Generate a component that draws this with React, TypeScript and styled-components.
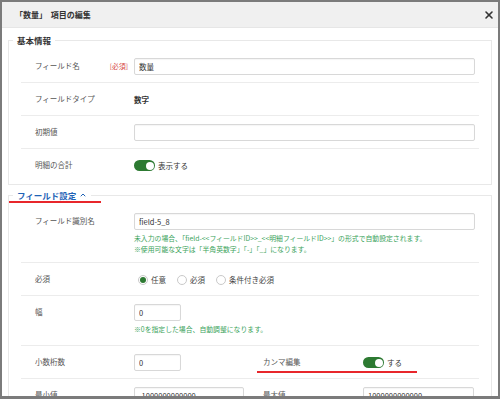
import React from 'react';
import styled, { createGlobalStyle } from 'styled-components';
import { ChevronUp, X } from 'lucide-react';

const GlobalStyle = createGlobalStyle`
  html, body {
    margin: 0;
    padding: 0;
    background: #fff;
  }
  body {
    font-family: "Noto Sans CJK JP", "Noto Sans", sans-serif;
  }
  * {
    box-sizing: border-box;
  }
`;

const Frame = styled.div`
  width: 500px;
  height: 399px;
  border: 2px solid #7b7b7b;
  border-bottom-width: 3px;
  overflow: hidden;
  background: #fff;
  display: flex;
  flex-direction: column;
`;

const Header = styled.header`
  flex: none;
  height: 26px;
  background: #f0f0f0;
  border-bottom: 1px solid #e6e6e6;
  display: flex;
  align-items: center;
  justify-content: space-between;
  padding: 0 3px 0 13px;
`;

const Title = styled.h1`
  margin: 0;
  font-size: 8px;
  font-weight: 700;
  color: #333;
  word-spacing: 2px;
`;

const Close = styled.button`
  border: 0;
  background: none;
  padding: 0;
  display: flex;
  color: #333;
`;

const Body = styled.div`
  flex: 1;
  overflow: hidden;
  padding: 6px 6px 0;
`;

const Section = styled.fieldset`
  margin: 0 0 4px;
  padding: 4px 0 3px;
  border: 1px solid #e8e8e8;
  min-width: 0;
`;

const Legend = styled.legend<{ $accent?: boolean }>`
  position: relative;
  margin-left: 4px;
  padding: 0 4px;
  font-size: 8.5px;
  line-height: 12px;
  font-weight: 700;
  color: ${p => (p.$accent ? '#1f63b6' : '#333')};
  display: flex;
  align-items: center;
  gap: 3px;
`;

const Underline = styled.span<{ $left: number; $width: number; $bottom?: number }>`
  position: absolute;
  z-index: 1;
  left: ${p => p.$left}px;
  width: ${p => p.$width}px;
  bottom: ${p => p.$bottom ?? -1}px;
  height: 2px;
  background: #e8262b;
`;

const Row = styled.div`
  margin: 0 12px;
  padding: 8px 4px 7px 14px;
  border-bottom: 1px solid #ececec;
  display: flex;
  align-items: flex-start;

  &:last-child {
    border-bottom: none;
  }
`;

const HalfGrid = styled(Row)`
  display: grid;
  grid-template-columns: 228px 1fr;
`;

const Half = styled.div`
  position: relative;
  display: flex;
  align-items: flex-start;
`;

const LabelCell = styled.div<{ $w?: number }>`
  flex: none;
  width: ${p => p.$w ?? 99}px;
  height: 15px;
  padding-right: 6px;
  display: flex;
  align-items: center;
  justify-content: space-between;
  font-size: 7.5px;
  color: #555;
`;

const Required = styled.span`
  font-size: 6.8px;
  color: #d64541;
`;

const Field = styled.div`
  flex: 1;
  min-width: 0;
  display: flex;
  flex-direction: column;
`;

const TextInput = styled.input<{ $w?: number }>`
  width: ${p => (p.$w ? `${p.$w}px` : '100%')};
  height: 17px;
  border: 1px solid #d8d8d8;
  border-radius: 2px;
  padding: 0 4px;
  font-family: inherit;
  font-size: 7.5px;
  color: #333;
  background: #fff;
  box-shadow: inset 0 1px 1px rgba(0, 0, 0, 0.04);
  outline: none;
`;

const Value = styled.div`
  height: 17px;
  display: flex;
  align-items: center;
  font-size: 7.5px;
  font-weight: 700;
  color: #333;
`;

const Help = styled.div<{ $after?: number }>`
  margin-top: 3px;
  margin-bottom: ${p => p.$after ?? 0}px;
  font-size: 6.85px;
  line-height: 11px;
  color: #3aa35b;
  white-space: nowrap;
`;

const Inline = styled.div`
  height: 17px;
  display: flex;
  align-items: center;
  gap: 3px;
  font-size: 7.5px;
  color: #333;
`;

const Toggle = styled.span`
  width: 21px;
  height: 11px;
  border-radius: 6px;
  background: #2d7a32;
  display: flex;
  align-items: center;
  justify-content: flex-end;
  padding: 0 1.5px;

  &::after {
    content: '';
    width: 8px;
    height: 8px;
    border-radius: 50%;
    background: #fff;
  }
`;

const RadioGroup = styled.div`
  height: 17px;
  padding-left: 4px;
  display: flex;
  align-items: center;
  gap: 11px;
`;

const RadioItem = styled.label`
  display: flex;
  align-items: center;
  gap: 3px;
  font-size: 7.5px;
  color: #444;
`;

const RadioDot = styled.span<{ $on?: boolean }>`
  width: 10px;
  height: 10px;
  border-radius: 50%;
  border: 1px solid #c9c9c9;
  background: #fff;
  display: flex;
  align-items: center;
  justify-content: center;

  &::after {
    content: '';
    width: 6px;
    height: 6px;
    border-radius: 50%;
    background: ${p => (p.$on ? '#2d7a32' : 'transparent')};
  }
`;

const radios = [
  { label: '任意', on: true },
  { label: '必須', on: false },
  { label: '条件付き必須', on: false },
];

export default function App() {
  return (
    <>
      <GlobalStyle />
      <Frame>
        <Header>
          <Title>「数量」 項目の編集</Title>
          <Close aria-label="閉じる">
            <X size={12} strokeWidth={3.2} />
          </Close>
        </Header>
        <Body>
          <Section>
            <Legend>基本情報</Legend>
            <Row>
              <LabelCell>
                フィールド名<Required>[必須]</Required>
              </LabelCell>
              <Field>
                <TextInput defaultValue="数量" />
              </Field>
            </Row>
            <Row>
              <LabelCell>フィールドタイプ</LabelCell>
              <Field>
                <Value>数字</Value>
              </Field>
            </Row>
            <Row>
              <LabelCell>初期値</LabelCell>
              <Field>
                <TextInput defaultValue="" />
              </Field>
            </Row>
            <Row>
              <LabelCell>明細の合計</LabelCell>
              <Field>
                <Inline>
                  <Toggle />
                  表示する
                </Inline>
              </Field>
            </Row>
          </Section>

          <Section>
            <Legend $accent>
              フィールド設定
              <ChevronUp size={8} strokeWidth={3} />
              <Underline $left={-4} $width={92} $bottom={-2} />
            </Legend>
            <Row>
              <LabelCell>フィールド識別名</LabelCell>
              <Field>
                <TextInput defaultValue="field-5_8" />
                <Help>
                  未入力の場合、「field-&lt;&lt;フィールドID&gt;&gt;_&lt;&lt;明細フィールドID&gt;&gt;」の形式で自動設定されます。
                  <br />
                  ※使用可能な文字は「半角英数字」「-」「_」になります。
                </Help>
              </Field>
            </Row>
            <Row>
              <LabelCell>必須</LabelCell>
              <Field>
                <RadioGroup>
                  {radios.map(r => (
                    <RadioItem key={r.label}>
                      <RadioDot $on={r.on} />
                      {r.label}
                    </RadioItem>
                  ))}
                </RadioGroup>
              </Field>
            </Row>
            <Row>
              <LabelCell>幅</LabelCell>
              <Field>
                <TextInput $w={47} defaultValue="0" />
                <Help $after={3}>※0を指定した場合、自動調整になります。</Help>
              </Field>
            </Row>
            <HalfGrid>
              <Half>
                <LabelCell>小数桁数</LabelCell>
                <Field>
                  <TextInput $w={47} defaultValue="0" />
                </Field>
              </Half>
              <Half>
                <LabelCell $w={100}>カンマ編集</LabelCell>
                <Field>
                  <Inline>
                    <Toggle />
                    する
                  </Inline>
                </Field>
                <Underline $left={-6} $width={160} $bottom={-2} />
              </Half>
            </HalfGrid>
            <HalfGrid>
              <Half>
                <LabelCell>最小値</LabelCell>
                <Field>
                  <TextInput $w={110} defaultValue="-1000000000000" />
                </Field>
              </Half>
              <Half>
                <LabelCell $w={100}>最大値</LabelCell>
                <Field>
                  <TextInput $w={111} defaultValue="1000000000000" />
                </Field>
              </Half>
            </HalfGrid>
          </Section>
        </Body>
      </Frame>
    </>
  );
}
